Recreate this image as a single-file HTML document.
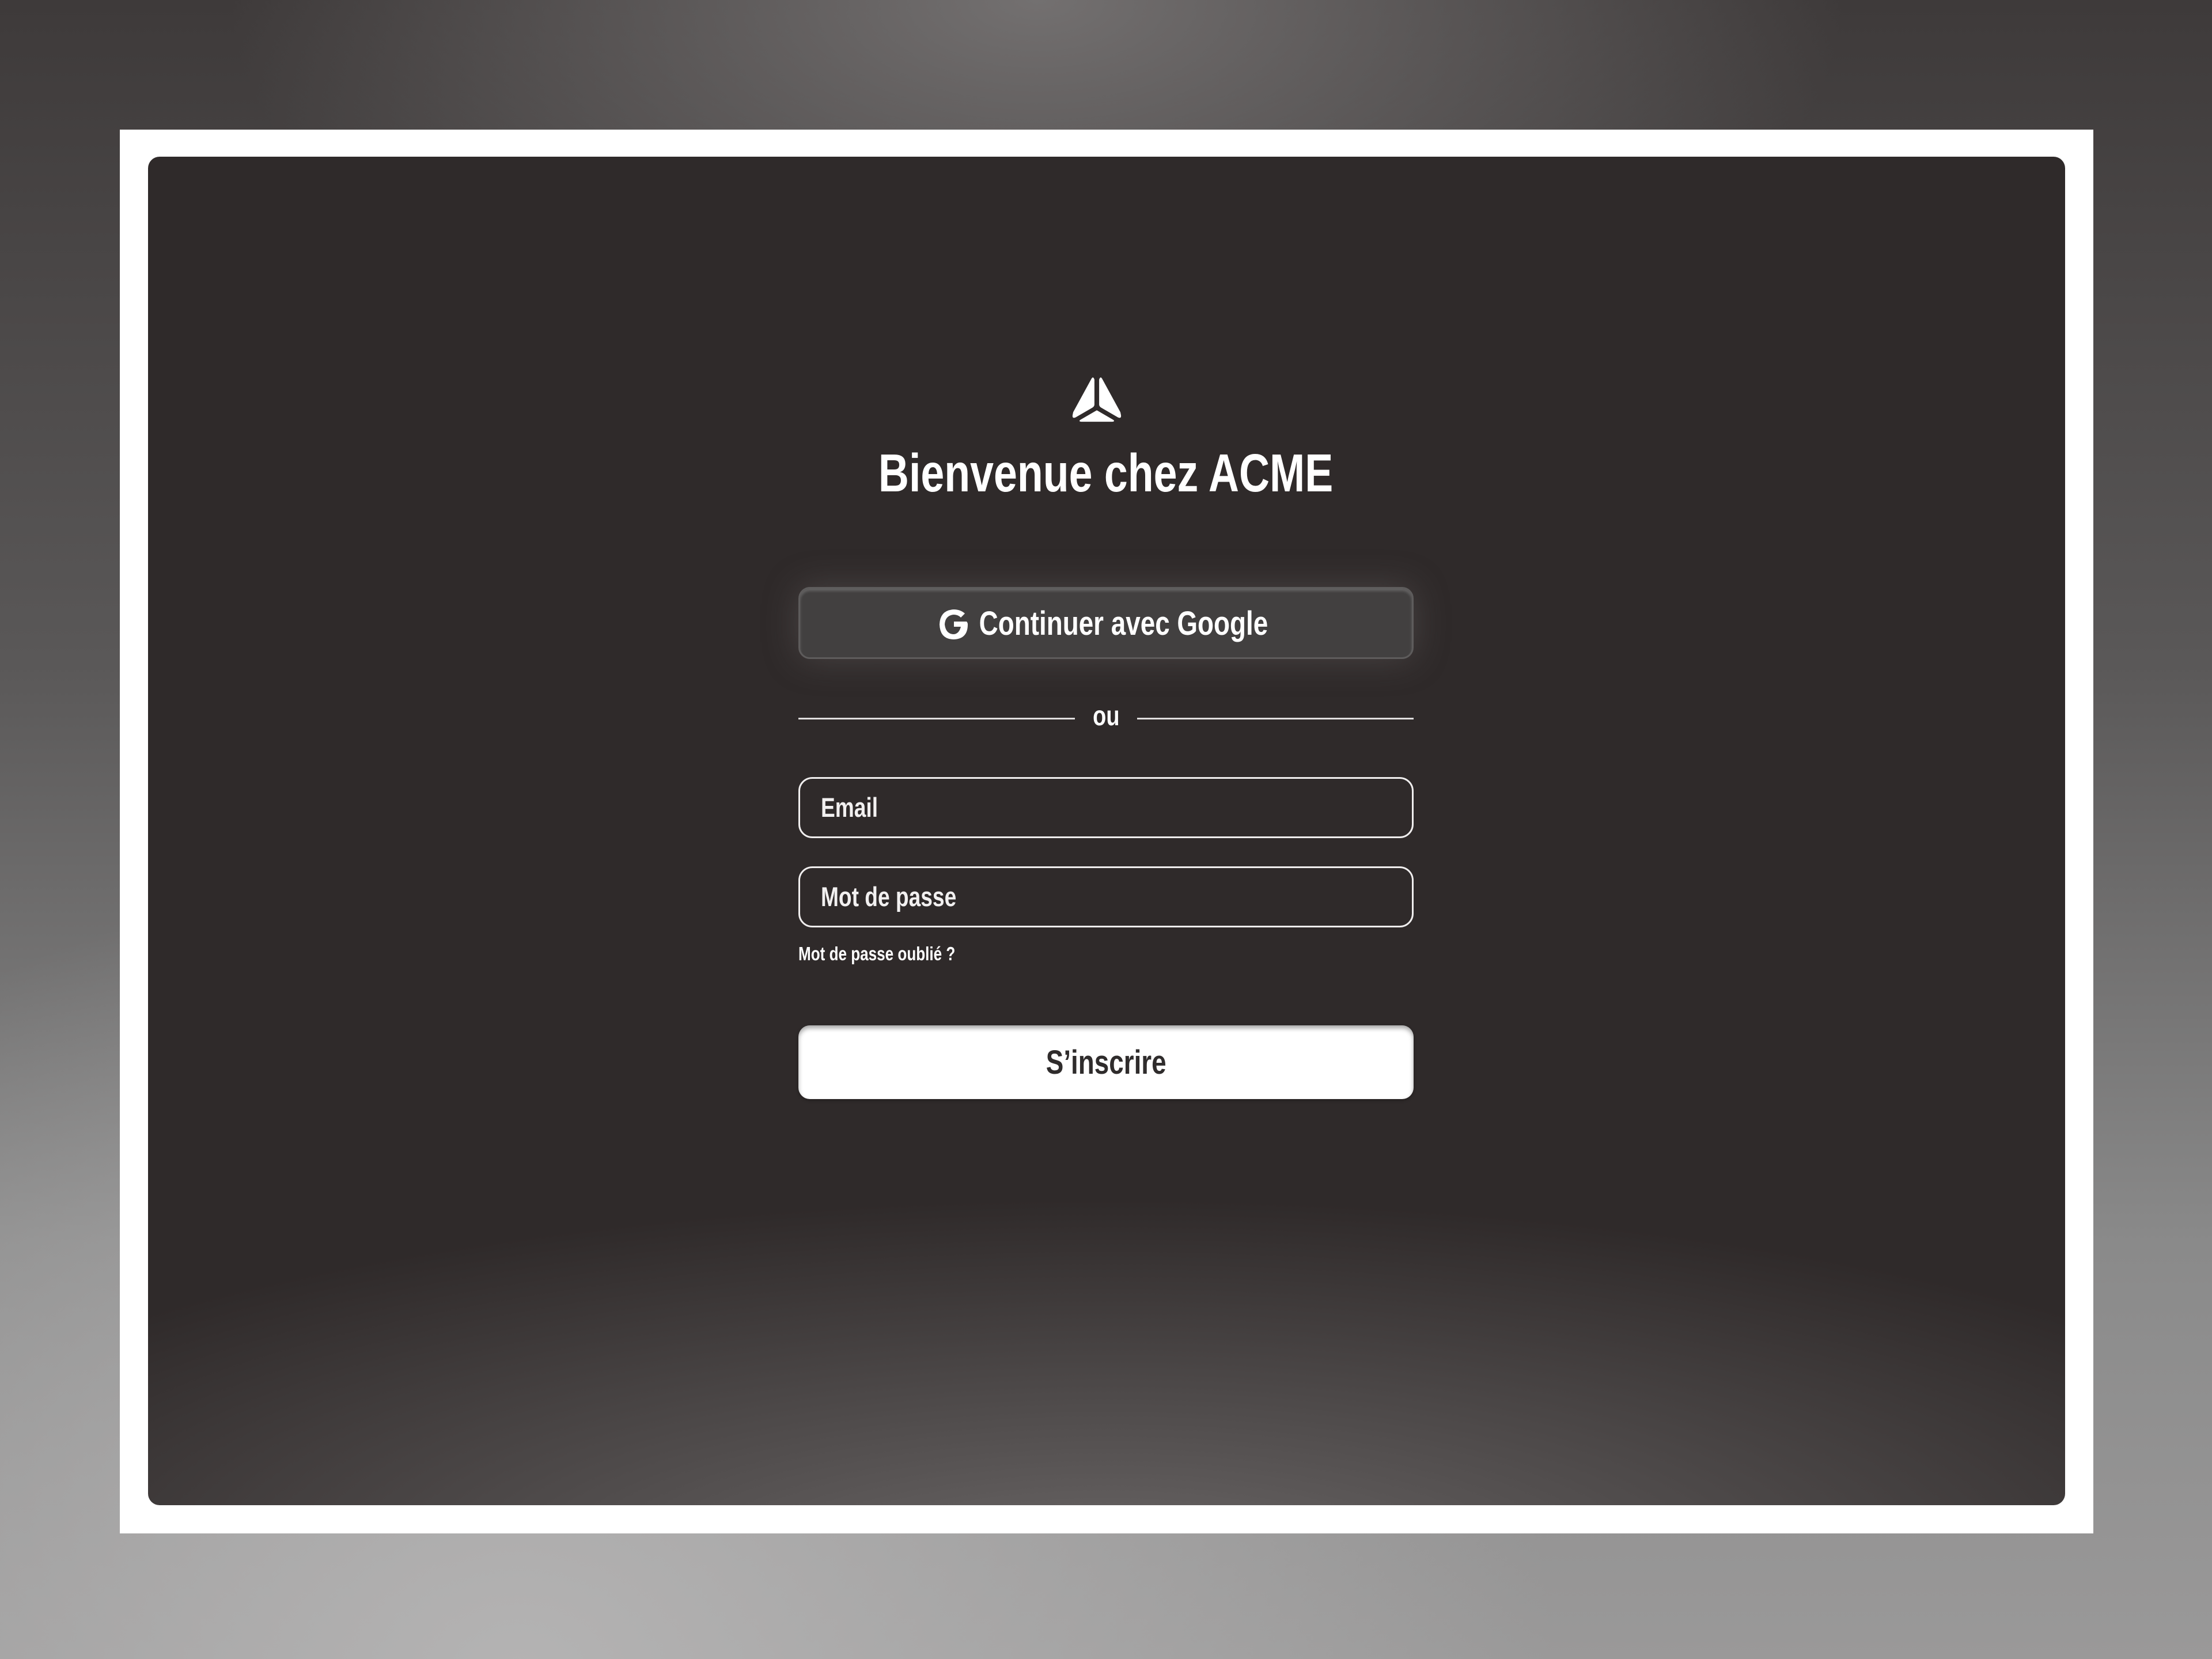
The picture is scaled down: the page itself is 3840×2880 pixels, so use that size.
<!DOCTYPE html>
<html><head><meta charset="utf-8">
<style>
html,body{margin:0;padding:0;}
body{width:3840px;height:2880px;position:relative;overflow:hidden;
background:
radial-gradient(ellipse 1400px 700px at 1800px 0px, #737070 0%, rgba(115,112,112,0) 100%),
radial-gradient(ellipse 1800px 1400px at 900px 2900px, #b4b3b3 0%, rgba(180,179,179,0) 100%),
linear-gradient(180deg,#3e3a3a 0%,#5a5858 40%,#8a8a8a 75%,#9a9999 100%);
font-family:"Liberation Sans",sans-serif;font-weight:bold;}
.frame{position:absolute;left:208px;top:225px;width:3426px;height:2437px;background:#fff;}
.panel{position:absolute;left:257px;top:272px;width:3328px;height:2341px;border-radius:20px;overflow:hidden;
background:
radial-gradient(ellipse 2300px 640px at 1664px 2450px, #6a6666 0%, #524e4e 40%, rgba(47,42,42,0) 100%),
#2f2a2a;}
.c{position:absolute;left:0;width:3840px;text-align:center;color:#fff;white-space:nowrap;}
.s{display:inline-block;transform:scaleX(0.79);transform-origin:center;}
.title{top:766px;font-size:93px;line-height:110px;}
.gbtn{position:absolute;left:1386px;top:1019px;width:1068px;height:125px;box-sizing:border-box;border-radius:20px;
background:#424040;border:3px solid #5e5c5c;box-shadow:0 0 60px rgba(120,115,115,0.35), inset 0 4px 5px rgba(255,255,255,0.18);}
.gtxt{top:1050px;font-size:58px;line-height:66px;padding-left:60px;box-sizing:border-box;}
.gicon{position:absolute;left:1628px;top:1055px;width:56px;height:58px;}
.line{position:absolute;top:1246px;height:3px;background:#e0dede;}
.ou{top:1214px;font-size:48px;line-height:60px;}
.inp{position:absolute;left:1386px;width:1068px;height:106px;box-sizing:border-box;border:3px solid #f0eeee;border-radius:24px;}
.lbl{position:absolute;left:1425px;color:#f2f0f0;font-size:47px;line-height:56px;white-space:nowrap;transform:scaleX(0.79);transform-origin:left center;}
.forgot{position:absolute;left:1386px;top:1636px;font-size:33px;line-height:40px;color:#fff;white-space:nowrap;transform:scaleX(0.79);transform-origin:left center;}
.sbtn{position:absolute;left:1386px;top:1780px;width:1068px;height:128px;border-radius:20px;background:#fff;
box-shadow:inset 0 5px 8px rgba(0,0,0,0.35), 0 2px 6px rgba(0,0,0,0.3);}
.stxt{top:1812px;font-size:58px;line-height:66px;color:#2f2c2c;}
</style></head><body>
<div class="frame"></div>
<div class="panel"></div>
<svg style="position:absolute;left:1861px;top:654px" width="86" height="79" viewBox="0 0 84 95" preserveAspectRatio="none">
<path d="M33 4 Q36 -2 38 6 L38 58 Q38 62 34 65 L6 85 Q0 88 1 80 L2 74 Z" fill="#fff"/>
<path d="M51 4 Q48 -2 46 6 L46 58 Q46 62 50 65 L78 85 Q84 88 83 80 L82 74 Z" fill="#fff"/>
<path d="M42 70 L70 90 Q74 94 66 94 L18 94 Q10 94 14 90 Z" fill="#fff"/>
</svg>
<div class="c title"><span class="s">Bienvenue chez ACME</span></div>
<div class="gbtn"></div>
<svg class="gicon" viewBox="0 0 56 58"><path d="M50 24 L28 24 L28 33 L40 33 Q37 45 28 46 Q14 46 12 29 Q13 13 28 12 Q35 12 40 17 L47 10 Q39 3 28 3 Q4 4 3 29 Q4 55 28 55 Q52 54 52 29 Q52 26 50 24 Z" fill="#fff"/></svg>
<div class="c gtxt"><span class="s">Continuer avec Google</span></div>
<div class="line" style="left:1386px;width:480px"></div>
<div class="line" style="left:1974px;width:480px"></div>
<div class="c ou"><span class="s">ou</span></div>
<div class="inp" style="top:1349px"></div>
<div class="lbl" style="top:1374px">Email</div>
<div class="inp" style="top:1504px"></div>
<div class="lbl" style="top:1529px">Mot de passe</div>
<div class="forgot">Mot de passe oublié ?</div>
<div class="sbtn"></div>
<div class="c stxt"><span class="s">S’inscrire</span></div>
</body></html>
